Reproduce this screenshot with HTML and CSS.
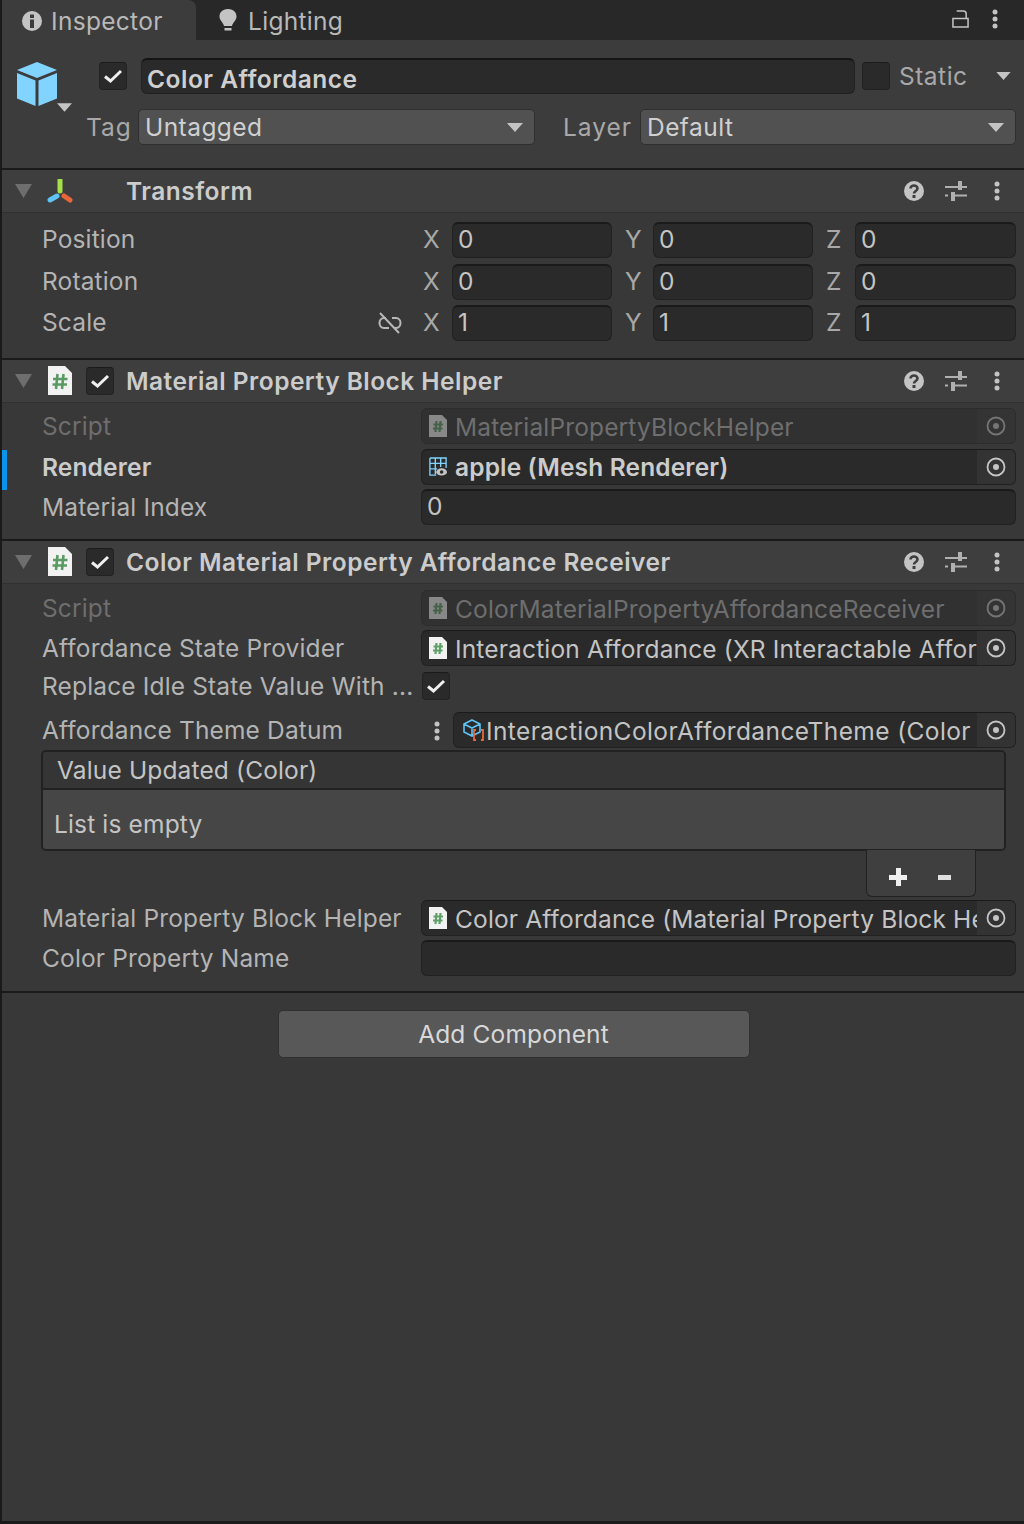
FILE: index.html
```html
<!DOCTYPE html>
<html lang="en">
<head>
    <meta charset="UTF-8">
    <meta name="viewport" content="width=device-width, initial-scale=1.0">
    <title>Inspector</title>
    <link rel="stylesheet" href="styles.css">
</head>
<body>
    <!-- shared icons -->
    <svg class="sprite" width="0" height="0">
        <symbol id="i-script" viewBox="0 0 26 30">
            <path d="M1 0H18L25 7V29H1Z" fill="#f2f2f2"/>
            <path d="M10.500 8L9 23M16.500 8L15 23M6 13H20.500M5.500 18.500H20" stroke="#5a9a63" stroke-width="2.600" fill="none"/>
        </symbol>
        <symbol id="i-script-small" viewBox="0 0 18 22">
            <path d="M0 0H13L18 5V22H0Z" fill="#f2f2f2"/>
            <path d="M7.500 6L6.500 17M11.500 6L10.500 17M4.500 9.500H14M4 13.500H13.500" stroke="#5f9f68" stroke-width="2.200" fill="none"/>
        </symbol>
        <symbol id="i-target" viewBox="0 0 20 20">
            <circle cx="10" cy="10" r="8.500" fill="none" stroke="#c4c4c4" stroke-width="1.800"/>
            <circle cx="10" cy="10" r="3" fill="#c4c4c4"/>
        </symbol>
        <symbol id="i-help" viewBox="0 0 20 20">
            <circle cx="10" cy="10" r="10" fill="#c4c4c4"/>
            <path d="M6.500 7.500C6.500 3.500 13.500 3.500 13.500 7.500C13.500 10 10 10 10 12.500" fill="none" stroke="#3e3e3e" stroke-width="2.600"/>
            <rect x="8.500" y="14" width="3" height="3" fill="#3e3e3e"/>
        </symbol>
        <symbol id="i-sliders" viewBox="0 0 22 20">
            <path d="M0 6H22M0 14.500H3M6 14.500H22" stroke="#b0b0b0" stroke-width="2" fill="none"/>
            <rect x="13" y="0" width="4" height="9" fill="#b0b0b0"/>
            <rect x="6" y="11" width="4" height="9" fill="#b0b0b0"/>
        </symbol>
        <symbol id="i-dots" viewBox="0 0 6 20">
            <circle cx="3" cy="3" r="2.500" fill="#c4c4c4"/>
            <circle cx="3" cy="10" r="2.500" fill="#c4c4c4"/>
            <circle cx="3" cy="17" r="2.500" fill="#c4c4c4"/>
        </symbol>
        <symbol id="i-check" viewBox="0 0 20 16">
            <path d="M2 8.500L7.500 13L18 3" fill="none" stroke="#f0f0f0" stroke-width="3"/>
        </symbol>
        <symbol id="i-down" viewBox="0 0 16 9">
            <path d="M0 0H16L8 9Z" fill="#c4c4c4"/>
        </symbol>
        <symbol id="i-fold" viewBox="0 0 17 14">
            <path d="M0 0H17L8.500 14Z" fill="#6e6e6e"/>
        </symbol>
    </svg>

    <div class="window">
        <div class="tabbar">
            <div class="tab tab-active">
                <svg class="tab-icon" viewBox="0 0 20 20"><circle cx="10" cy="10" r="10" fill="#c4c4c4"/><rect x="8" y="3.500" width="4" height="3.500" fill="#3c3c3c"/><rect x="8" y="8.500" width="4" height="8.500" fill="#3c3c3c"/></svg>
                <span>Inspector</span>
            </div>
            <div class="tab">
                <svg class="tab-icon" viewBox="0 0 20 24"><path d="M10 0C16 0 18.500 4 18.500 7.500C18.500 11.500 15 13 14 17H6C5 13 1.500 11.500 1.500 7.500C1.500 4 4 0 10 0Z" fill="#c4c4c4"/><rect x="6.500" y="19" width="7" height="2.500" fill="#c4c4c4"/></svg>
                <span>Lighting</span>
            </div>
            <div class="tabbar-tools">
                <svg class="lock-icon" viewBox="0 0 18 20"><path d="M1 9.500H17V18.500H1ZM5 1.500H12C14 1.500 15 2.500 15 4.500V9.500" fill="none" stroke="#c4c4c4" stroke-width="1.600"/></svg>
                <svg class="dots"><use href="#i-dots"/></svg>
            </div>
        </div>

        <div class="go-header">
            <div class="go-row go-row-first">
                <div class="go-icon">
                    <svg class="cube" viewBox="0 0 40 44"><path d="M20 0L40 8L20 16L0 8Z" fill="#80d4ff"/><path d="M0 11L18.500 18.500V44L0 36.500Z" fill="#80d4ff"/><path d="M40 11L21.500 18.500V44L40 36.500Z" fill="#80d4ff"/></svg>
                    <svg class="cube-caret"><use href="#i-down"/></svg>
                </div>
                <div class="check"><svg><use href="#i-check"/></svg></div>
                <div class="name-field">Color Affordance</div>
                <div class="check check-empty"></div>
                <span class="static-label">Static</span>
                <svg class="caret static-caret"><use href="#i-down"/></svg>
            </div>
            <div class="go-row go-row-second">
                <span class="tag-label">Tag</span>
                <div class="popup popup-tag"><span>Untagged</span><svg class="caret"><use href="#i-down"/></svg></div>
                <span class="layer-label">Layer</span>
                <div class="popup popup-layer"><span>Default</span><svg class="caret"><use href="#i-down"/></svg></div>
            </div>
        </div>

        <section class="component">
            <div class="comp-head">
                <svg class="fold"><use href="#i-fold"/></svg>
                <svg class="comp-icon transform-icon" viewBox="0 0 26 24">
                    <path d="M13 1V12" stroke="#a5e04a" stroke-width="5" stroke-linecap="round"/>
                    <path d="M10 17L3 21" stroke="#5ec3f5" stroke-width="5" stroke-linecap="round"/>
                    <path d="M17 17L23 21" stroke="#e8663a" stroke-width="5" stroke-linecap="round"/>
                </svg>
                <span class="comp-title comp-title-wide">Transform</span>
                <div class="comp-tools">
                    <svg class="help"><use href="#i-help"/></svg>
                    <svg class="sliders"><use href="#i-sliders"/></svg>
                    <svg class="dots"><use href="#i-dots"/></svg>
                </div>
            </div>
            <div class="comp-body comp-body-transform">
                <div class="row row-vec">
                    <span class="label">Position</span>
                    <div class="vec"><span>X</span><div class="field">0</div><span>Y</span><div class="field">0</div><span>Z</span><div class="field">0</div></div>
                </div>
                <div class="row row-vec">
                    <span class="label">Rotation</span>
                    <div class="vec"><span>X</span><div class="field">0</div><span>Y</span><div class="field">0</div><span>Z</span><div class="field">0</div></div>
                </div>
                <div class="row row-vec">
                    <span class="label">Scale</span>
                    <svg class="unlink" viewBox="0 0 26 22"><path d="M9 6H7C1 6 1 16 7 16H12M15 6H19C25 6 25 16 19 16H17M3 1L22 21" fill="none" stroke="#b8b8b8" stroke-width="2"/></svg>
                    <div class="vec"><span>X</span><div class="field">1</div><span>Y</span><div class="field">1</div><span>Z</span><div class="field">1</div></div>
                </div>
            </div>
        </section>

        <section class="component">
            <div class="comp-head">
                <svg class="fold"><use href="#i-fold"/></svg>
                <svg class="comp-icon"><use href="#i-script"/></svg>
                <div class="check check-comp"><svg><use href="#i-check"/></svg></div>
                <span class="comp-title">Material Property Block Helper</span>
                <div class="comp-tools">
                    <svg class="help"><use href="#i-help"/></svg>
                    <svg class="sliders"><use href="#i-sliders"/></svg>
                    <svg class="dots"><use href="#i-dots"/></svg>
                </div>
            </div>
            <div class="comp-body comp-body-mpb">
                <div class="row row-disabled">
                    <span class="label">Script</span>
                    <div class="field field-object">
                        <svg class="obj-icon"><use href="#i-script-small"/></svg>
                        <span class="obj-text">MaterialPropertyBlockHelper</span>
                        <span class="target"><svg><use href="#i-target"/></svg></span>
                    </div>
                </div>
                <div class="row row-changed">
                    <span class="label label-bold">Renderer</span>
                    <div class="field field-object">
                        <svg class="obj-icon" viewBox="0 0 20 22">
                            <path d="M1 1H19V12M1 1V20H8M7 1V19M13 1V11M1 7H19M1 13H9" fill="none" stroke="#80d4ff" stroke-width="1.500"/>
                            <ellipse cx="14" cy="16.500" rx="6" ry="4" fill="#c4c4c4"/><circle cx="14" cy="16.500" r="2" fill="#2a2a2a"/>
                        </svg>
                        <span class="obj-text obj-text-bold">apple (Mesh Renderer)</span>
                        <span class="target"><svg><use href="#i-target"/></svg></span>
                    </div>
                </div>
                <div class="row">
                    <span class="label">Material Index</span>
                    <div class="field">0</div>
                </div>
            </div>
        </section>

        <section class="component component-last">
            <div class="comp-head">
                <svg class="fold"><use href="#i-fold"/></svg>
                <svg class="comp-icon"><use href="#i-script"/></svg>
                <div class="check check-comp"><svg><use href="#i-check"/></svg></div>
                <span class="comp-title">Color Material Property Affordance Receiver</span>
                <div class="comp-tools">
                    <svg class="help"><use href="#i-help"/></svg>
                    <svg class="sliders"><use href="#i-sliders"/></svg>
                    <svg class="dots"><use href="#i-dots"/></svg>
                </div>
            </div>
            <div class="comp-body comp-body-color">
                <div class="row row-disabled">
                    <span class="label">Script</span>
                    <div class="field field-object">
                        <svg class="obj-icon"><use href="#i-script-small"/></svg>
                        <span class="obj-text">ColorMaterialPropertyAffordanceReceiver</span>
                        <span class="target"><svg><use href="#i-target"/></svg></span>
                    </div>
                </div>
                <div class="row">
                    <span class="label">Affordance State Provider</span>
                    <div class="field field-object">
                        <svg class="obj-icon"><use href="#i-script-small"/></svg>
                        <span class="obj-text">Interaction Affordance (XR Interactable Affor</span>
                        <span class="target"><svg><use href="#i-target"/></svg></span>
                    </div>
                </div>
                <div class="row row-check">
                    <span class="label">Replace Idle State Value With ...</span>
                    <div class="check"><svg><use href="#i-check"/></svg></div>
                </div>
                <div class="row row-theme">
                    <span class="label">Affordance Theme Datum</span>
                    <svg class="dots theme-dots"><use href="#i-dots"/></svg>
                    <div class="field field-object field-theme">
                        <svg class="obj-icon theme-icon" viewBox="0 0 22 24">
                            <path d="M9 2L17 6V14L9 18L1 14V6ZM1 6L9 10L17 6M9 10V18" fill="none" stroke="#5ec3f5" stroke-width="1.600"/>
                            <path d="M13 12H11V22H13M18 12H20V22H18" fill="none" stroke="#e8663a" stroke-width="1.800"/>
                        </svg>
                        <span class="obj-text">InteractionColorAffordanceTheme (Color</span>
                        <span class="target"><svg><use href="#i-target"/></svg></span>
                    </div>
                </div>
                <div class="event-box">
                    <div class="event-title">Value Updated (Color)</div>
                    <div class="event-list">List is empty</div>
                </div>
                <div class="event-foot">
                    <div class="plus-minus"><span class="plus"></span><span class="minus"></span></div>
                </div>
                <div class="row">
                    <span class="label">Material Property Block Helper</span>
                    <div class="field field-object">
                        <svg class="obj-icon"><use href="#i-script-small"/></svg>
                        <span class="obj-text">Color Affordance (Material Property Block He</span>
                        <span class="target"><svg><use href="#i-target"/></svg></span>
                    </div>
                </div>
                <div class="row">
                    <span class="label">Color Property Name</span>
                    <div class="field"></div>
                </div>
            </div>
        </section>

        <div class="add-wrap">
            <div class="add-button">Add Component</div>
        </div>
    </div>
</body>
</html>
```

FILE: styles.css
```css
* {
    box-sizing: border-box;
}

html, body {
    margin: 0;
    padding: 0;
    height: 100%;
}

body {
    font-family: Inter, "Noto Sans", sans-serif;
    font-size: 24.5px;
    letter-spacing: 0.15px;
    color: #c4c4c4;
    background: #1a1a1a;
    overflow: hidden;
}

.sprite {
    position: absolute;
}

svg {
    display: block;
    flex: none;
}

.window {
    height: 1521px;
    margin-left: 2px;
    background: #383838;
    display: flex;
    flex-direction: column;
}

/* tabs */
.tabbar {
    height: 40px;
    background: #282828;
    display: flex;
}

.tab {
    display: flex;
    align-items: center;
    height: 40px;
    padding-top: 2px;
    color: #b8b8b8;
    letter-spacing: 0.3px;
}

.tab-active {
    width: 194px;
    padding-left: 20px;
    background: #3c3c3c;
    border-radius: 0 8px 0 0;
}

.tab-icon {
    width: 20px;
    height: 24px;
    margin-right: 9px;
}

.tab:not(.tab-active) {
    padding-left: 22px;
}

.tab:not(.tab-active) .tab-icon {
    margin-right: 10px;
}

.tabbar-tools {
    margin-left: auto;
    display: flex;
    align-items: flex-start;
    padding: 9px 26px 0 0;
}

.lock-icon {
    width: 17px;
    height: 20px;
    margin-right: 23px;
}

.dots {
    width: 6px;
    height: 20px;
}

/* game object header */
.go-header {
    height: 130px;
    background: #3c3c3c;
    border-bottom: 2px solid #1a1a1a;
    padding-top: 18px;
}

.go-row {
    display: flex;
    align-items: center;
    height: 36px;
}

.go-row-second {
    margin-top: 15px;
}

.go-icon {
    position: relative;
    width: 97px;
    height: 36px;
    padding-left: 15px;
    padding-top: 4px;
}

.cube {
    width: 40px;
    height: 44px;
}

.cube-caret {
    position: absolute;
    left: 55px;
    top: 45px;
    width: 15px;
    height: 9px;
}

.check {
    width: 28px;
    height: 28px;
    background: #2a2a2a;
    border: 1px solid #222;
    border-top-color: #1a1a1a;
    border-radius: 4px;
    display: flex;
    align-items: center;
    justify-content: center;
    flex: none;
}

.check svg {
    width: 20px;
    height: 16px;
}

.name-field {
    margin-left: 14px;
    width: 714px;
    height: 36px;
    line-height: 38px;
    padding-left: 5px;
    background: #2a2a2a;
    border: 1px solid #212121;
    border-top: 2px solid #141414;
    border-radius: 6px;
    font-weight: 600;
    letter-spacing: 0.5px;
    color: #cfcfcf;
}

.check-empty {
    margin-left: 7px;
}

.static-label {
    margin-left: 9px;
    width: 97px;
    color: #a8a8a8;
    letter-spacing: 0.5px;
}

.caret {
    width: 16px;
    height: 9px;
}

.go-row-first .static-caret {
    width: 15px;
    height: 8px;
}

.tag-label, .layer-label {
    color: #a8a8a8;
    letter-spacing: 1px;
}

.tag-label {
    margin-left: 84px;
    width: 52px;
}

.layer-label {
    margin-left: 28px;
    width: 77px;
}

.popup {
    height: 36px;
    background: #515151;
    border: 1px solid #2f2f2f;
    border-radius: 5px;
    padding: 0 11px 0 6px;
    display: flex;
    align-items: center;
    justify-content: space-between;
    color: #d0d0d0;
    letter-spacing: 0.45px;
}

.popup-tag {
    width: 397px;
}

.popup-layer {
    width: 376px;
}

/* components */
.component {
    border-bottom: 2px solid #1a1a1a;
}

.comp-head {
    height: 43px;
    background: #3e3e3e;
    border-bottom: 1px solid #303030;
    display: flex;
    align-items: center;
}

.fold {
    width: 17px;
    height: 14px;
    margin-left: 13px;
}

.comp-icon {
    width: 26px;
    height: 30px;
    margin-left: 15px;
}

.transform-icon {
    height: 24px;
}

.check-comp {
    margin-left: 13px;
    margin-top: -1px;
}

.comp-title {
    margin-left: 12px;
    font-weight: 600;
    letter-spacing: 0.47px;
    color: #cccccc;
}

.comp-title-wide {
    margin-left: 53px;
}

.comp-tools {
    margin-left: auto;
    display: flex;
    align-items: center;
    padding-right: 24px;
}

.help {
    width: 20px;
    height: 20px;
}

.sliders {
    width: 22px;
    height: 20px;
    margin-left: 21px;
    margin-right: 27px;
}

.comp-body {
    display: flex;
    flex-direction: column;
    padding-right: 8px;
}

.comp-body-transform {
    padding-top: 9px;
    padding-bottom: 17px;
    gap: 5.500px;
}

.comp-body-mpb {
    padding-top: 5px;
    padding-bottom: 14px;
    gap: 4.500px;
}

.comp-body-color {
    padding-top: 6px;
    padding-bottom: 15px;
    gap: 4px;
}

.row {
    display: flex;
    align-items: center;
    height: 36px;
    position: relative;
}

.label {
    width: 419px;
    padding-left: 40px;
    flex: none;
    white-space: nowrap;
    color: #b4b4b4;
}

.label-bold {
    font-weight: 600;
    color: #cccccc;
}

.field {
    flex: 1;
    min-width: 0;
    height: 36px;
    line-height: 31px;
    padding-left: 5px;
    background: #2a2a2a;
    border: 1px solid #212121;
    border-top: 2px solid #1a1a1a;
    border-radius: 6px;
    color: #c4c4c4;
}

/* vector rows */
.row-vec .label {
    width: auto;
    flex: 1;
    padding-bottom: 2px;
}

.unlink {
    width: 26px;
    height: 22px;
    margin-right: 18px;
}

.vec {
    width: 595px;
    flex: none;
    display: grid;
    grid-template-columns: 31px 160px 41px 160px 42px 161px;
    align-items: center;
    color: #a8a8a8;
}

.vec > span {
    padding-left: 13px;
    padding-bottom: 2px;
}

.vec > span:first-child {
    padding-left: 2px;
}

/* object reference fields */
.field-object {
    display: flex;
    align-items: center;
    padding-left: 7px;
    overflow: hidden;
    border-top-width: 1px;
}

.obj-icon {
    width: 18px;
    height: 22px;
    margin-right: 8px;
}

.obj-text {
    flex: 1;
    min-width: 0;
    padding-top: 1px;
    line-height: 32px;
    white-space: nowrap;
    overflow: hidden;
}

.obj-text-bold {
    font-weight: 600;
    letter-spacing: 0.15px;
    color: #cccccc;
}

.target {
    width: 38px;
    align-self: stretch;
    background: #333;
    display: flex;
    align-items: center;
    justify-content: center;
    flex: none;
}

.target svg {
    width: 20px;
    height: 20px;
}

.row-disabled .label,
.row-disabled .obj-text {
    color: #6e6e6e;
}

.row-disabled .field-object {
    background: #313131;
    border-color: #2c2c2c;
}

.row-disabled .obj-icon,
.row-disabled .target svg {
    opacity: 0.45;
}

.row-disabled .target {
    background: #343434;
}

.row-changed::before {
    content: "";
    position: absolute;
    left: 0;
    top: 1px;
    width: 5px;
    height: 40px;
    background: #0a93e8;
}

.row-check {
    height: 29px;
    margin-top: 1px;
    margin-bottom: 8px;
}

.row-check .check {
    margin-left: 1px;
}

.row-theme {
    margin-bottom: -2px;
}

.theme-dots {
    position: absolute;
    left: 432px;
    top: 9px;
}

.field-theme {
    margin-left: 32px;
    padding-left: 9px;
}

.field-theme .obj-text {
    letter-spacing: 0.4px;
}

.theme-icon {
    width: 22px;
    height: 24px;
    margin-right: 1px;
}

/* event box */
.event-box {
    margin-left: 39px;
    margin-right: 10px;
    height: 101px;
    border: 2px solid #212121;
    border-radius: 5px;
    overflow: hidden;
    display: flex;
    flex-direction: column;
}

.event-title {
    height: 38px;
    line-height: 36px;
    padding-left: 14px;
    background: #353535;
    border-bottom: 2px solid #212121;
}

.event-list {
    flex: 1;
    padding-left: 11px;
    padding-top: 19px;
    background: #464646;
}

.event-foot {
    display: flex;
    justify-content: flex-end;
    padding-right: 40px;
    height: 47px;
    margin-top: -5px;
    margin-bottom: -1px;
}

.plus-minus {
    width: 110px;
    height: 47px;
    background: #3f3f3f;
    border: 1px solid #212121;
    border-top: 0;
    border-radius: 0 0 6px 6px;
    display: flex;
    align-items: center;
    padding-left: 22px;
    padding-top: 8px;
}

.plus {
    width: 18px;
    height: 18px;
    background:
        linear-gradient(#f0f0f0, #f0f0f0) center / 18px 5px no-repeat,
        linear-gradient(#f0f0f0, #f0f0f0) center / 5px 18px no-repeat;
}

.minus {
    width: 13px;
    height: 5px;
    margin-left: 31px;
    background: #e0e0e0;
}

/* add component */
.add-wrap {
    display: flex;
    justify-content: center;
    padding-top: 17px;
    padding-left: 1px;
}

.add-button {
    width: 472px;
    height: 48px;
    line-height: 47px;
    text-align: center;
    background: #585858;
    border: 1px solid #303030;
    border-radius: 5px;
    color: #d8d8d8;
}
```
